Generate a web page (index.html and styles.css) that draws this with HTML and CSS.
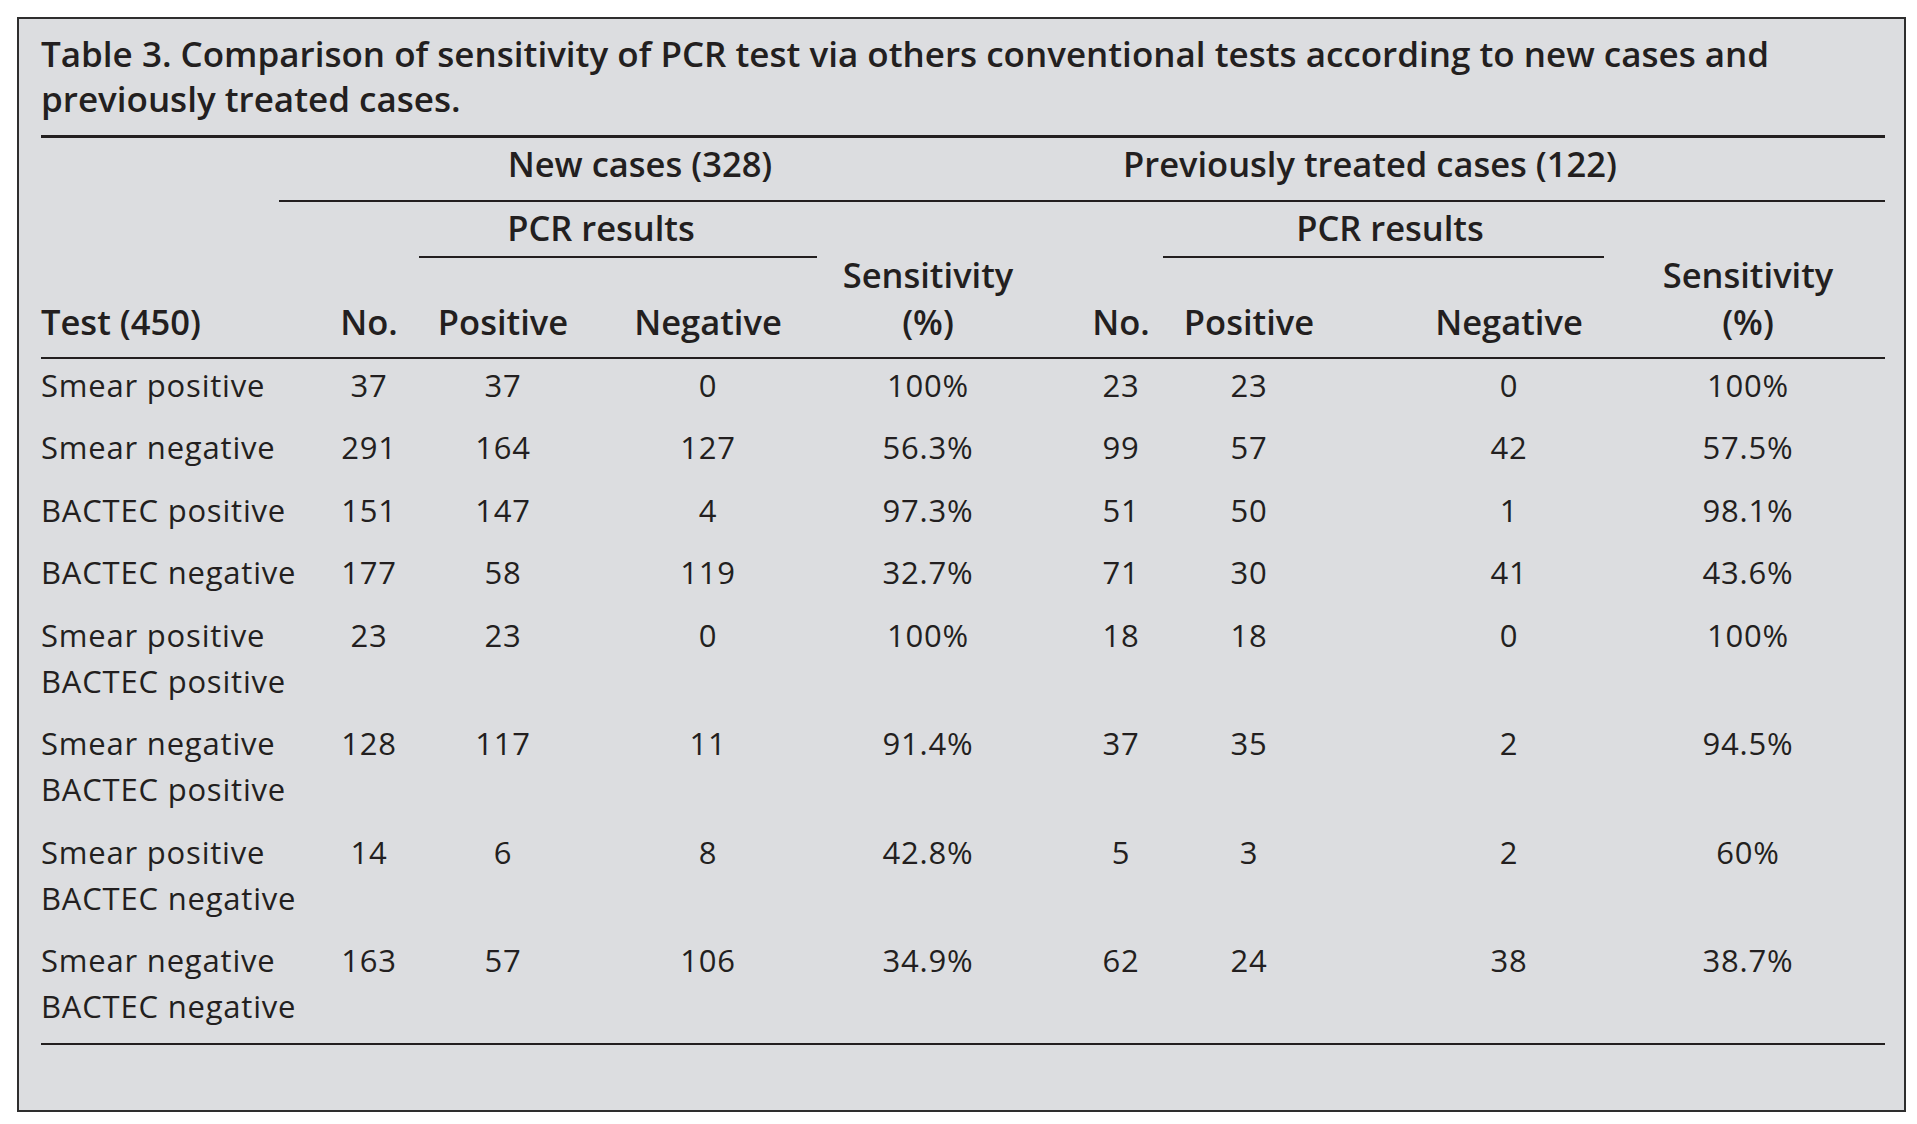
FILE: index.html
```html
<!DOCTYPE html>
<html lang="en">
<head>
<meta charset="utf-8">
<title>Table 3</title>
<link rel="stylesheet" href="styles.css">
</head>
<body>
<div class="frame">
  <p class="caption">Table 3. Comparison of sensitivity of PCR test via others conventional tests according to new cases and<br>previously treated cases.</p>
  <div class="table">
    <div class="head">
      <div class="group g-new">New cases (328)</div>
      <div class="group g-prev">Previously treated cases (122)</div>
      <div class="group-rule"></div>
      <div class="pcr pcr-new">PCR results</div>
      <div class="pcr pcr-prev">PCR results</div>
      <div class="hcell sens s-new">Sensitivity<br>(%)</div>
      <div class="hcell sens s-prev c9">Sensitivity<br>(%)</div>
      <div class="hcell left r4 k1">Test (450)</div>
      <div class="hcell r4 k2 c2">No.</div>
      <div class="hcell r4 k3">Positive</div>
      <div class="hcell r4 k4">Negative</div>
      <div class="hcell r4 k6 c6">No.</div>
      <div class="hcell r4 k7">Positive</div>
      <div class="hcell r4 k8 c8">Negative</div>
    </div>
    <div class="body">
      <div class="cell left">Smear positive</div><div class="cell c2">37</div><div class="cell">37</div><div class="cell">0</div><div class="cell">100%</div><div class="cell c6">23</div><div class="cell">23</div><div class="cell c8">0</div><div class="cell c9">100%</div>
      <div class="cell left">Smear negative</div><div class="cell c2">291</div><div class="cell">164</div><div class="cell">127</div><div class="cell">56.3%</div><div class="cell c6">99</div><div class="cell">57</div><div class="cell c8">42</div><div class="cell c9">57.5%</div>
      <div class="cell left">BACTEC positive</div><div class="cell c2">151</div><div class="cell">147</div><div class="cell">4</div><div class="cell">97.3%</div><div class="cell c6">51</div><div class="cell">50</div><div class="cell c8">1</div><div class="cell c9">98.1%</div>
      <div class="cell left">BACTEC negative</div><div class="cell c2">177</div><div class="cell">58</div><div class="cell">119</div><div class="cell">32.7%</div><div class="cell c6">71</div><div class="cell">30</div><div class="cell c8">41</div><div class="cell c9">43.6%</div>
      <div class="cell left">Smear positive<br>BACTEC positive</div><div class="cell c2">23</div><div class="cell">23</div><div class="cell">0</div><div class="cell">100%</div><div class="cell c6">18</div><div class="cell">18</div><div class="cell c8">0</div><div class="cell c9">100%</div>
      <div class="cell left">Smear negative<br>BACTEC positive</div><div class="cell c2">128</div><div class="cell">117</div><div class="cell">11</div><div class="cell">91.4%</div><div class="cell c6">37</div><div class="cell">35</div><div class="cell c8">2</div><div class="cell c9">94.5%</div>
      <div class="cell left">Smear positive<br>BACTEC negative</div><div class="cell c2">14</div><div class="cell">6</div><div class="cell">8</div><div class="cell">42.8%</div><div class="cell c6">5</div><div class="cell">3</div><div class="cell c8">2</div><div class="cell c9">60%</div>
      <div class="cell left">Smear negative<br>BACTEC negative</div><div class="cell c2">163</div><div class="cell">57</div><div class="cell">106</div><div class="cell">34.9%</div><div class="cell c6">62</div><div class="cell">24</div><div class="cell c8">38</div><div class="cell c9">38.7%</div>
    </div>
  </div>
</div>
</body>
</html>
```
FILE: styles.css
```css
html, body {
  margin: 0;
  padding: 0;
  background: #ffffff;
}

body {
  font-family: "Open Sans", Lato, "Liberation Sans", sans-serif;
  color: #231f20;
}

.frame {
  box-sizing: border-box;
  width: 1889px;
  height: 1095px;
  margin: 17px 0 0 17px;
  border: 2px solid #2e2e2e;
  background: #dcdde0;
  padding: 12px 19px 0 22px;
}

.caption {
  margin: 0 0 14px 0;
  font-weight: 600;
  font-size: 35px;
  line-height: 45px;
}

.table {
  width: 1844px;
  border-top: 3px solid #231f20;
}

.head,
.body {
  display: grid;
  grid-template-columns: 259px 119px 168px 242px 198px 136px 172px 305px 245px;
}

.head {
  grid-template-rows: 62px 2px 56px 99px;
  border-bottom: 2px solid #231f20;
  font-weight: 600;
  font-size: 34.5px;
  line-height: 46px;
}

.group {
  grid-row: 1;
  padding-top: 3px;
  text-align: center;
  white-space: nowrap;
}

.g-new {
  grid-column: 2 / 6;
  padding-right: 47px;
}

.g-prev {
  grid-column: 6 / 10;
  padding-right: 172px;
}

.group-rule {
  grid-row: 2;
  grid-column: 2 / 10;
  margin-left: -21px;
  background: #231f20;
}

.pcr {
  grid-row: 3;
  box-sizing: border-box;
  padding-top: 3px;
  border-bottom: 2px solid #231f20;
  text-align: center;
  white-space: nowrap;
}

.pcr-new {
  grid-column: 3 / 5;
  margin-right: 12px;
  padding-right: 34px;
}

.pcr-prev {
  grid-column: 7 / 9;
  margin-right: 36px;
  padding-left: 13px;
}

.hcell {
  text-align: center;
  white-space: nowrap;
  padding-bottom: 12px;
  align-self: end;
}

.sens {
  grid-row: 3 / 5;
  line-height: 47px;
}

.s-new { grid-column: 5; }
.s-prev { grid-column: 9; }

.r4 { grid-row: 4; }
.k1 { grid-column: 1; }
.k2 { grid-column: 2; }
.k3 { grid-column: 3; }
.k4 { grid-column: 4; }
.k6 { grid-column: 6; }
.k7 { grid-column: 7; }
.k8 { grid-column: 8; }

.body {
  border-bottom: 2px solid #231f20;
  font-size: 31px;
  line-height: 46px;
  letter-spacing: 0.8px;
}

.cell {
  padding: 2.5px 0 14px;
  text-align: center;
  white-space: nowrap;
}

.left {
  text-align: left;
  padding-left: 0;
}

.c2 { padding-left: 19px; }
.c6 { padding-left: 52px; }
.c8 { padding-left: 43px; }
.c9 { padding-right: 29px; }
```
